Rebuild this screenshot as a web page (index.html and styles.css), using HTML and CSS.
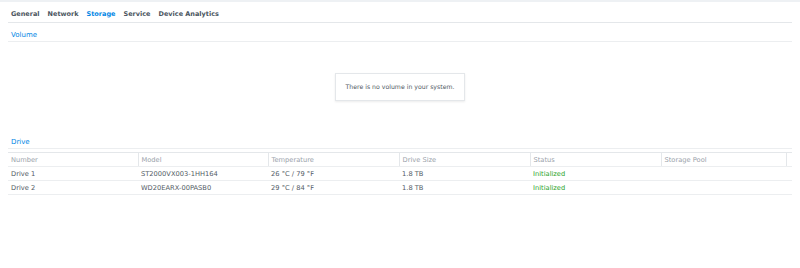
FILE: index.html
```html
<!DOCTYPE html>
<html lang="en">
<head>
  <meta charset="UTF-8" />
  <title>Info Center</title>
  <link rel="stylesheet" href="styles.css">
</head>
<body>
  <div class="top-strip"></div>
  <div class="page">
    <nav class="tabs">
      <span class="tab">General</span>
      <span class="tab">Network</span>
      <span class="tab active">Storage</span>
      <span class="tab">Service</span>
      <span class="tab">Device Analytics</span>
    </nav>

    <h2 class="section-title">Volume</h2>
    <div class="empty-area">
      <div class="empty-box">There is no volume in your system.</div>
    </div>

    <h2 class="section-title">Drive</h2>
    <table class="grid">
      <colgroup>
        <col class="c130"><col class="c130"><col class="c131"><col class="c131"><col class="c131"><col class="c125"><col>
      </colgroup>
      <thead>
        <tr>
          <th>Number</th><th>Model</th><th>Temperature</th><th>Drive Size</th><th>Status</th><th>Storage Pool</th><th class="pad"></th>
        </tr>
      </thead>
      <tbody>
        <tr>
          <td>Drive 1</td><td>ST2000VX003-1HH164</td><td>26 °C / 79 °F</td><td>1.8 TB</td><td class="ok">Initialized</td><td></td><td class="pad"></td>
        </tr>
        <tr>
          <td>Drive 2</td><td>WD20EARX-00PASB0</td><td>29 °C / 84 °F</td><td>1.8 TB</td><td class="ok">Initialized</td><td></td><td class="pad"></td>
        </tr>
      </tbody>
    </table>
  </div>
</body>
</html>
```

FILE: styles.css
```css
body {
  margin: 0;
  font-family: "DejaVu Sans", Verdana, sans-serif;
  font-size: 6.7px;
  color: #505a64;
  background: #fff;
}

.top-strip {
  height: 2px;
  background: #eef1f4;
}

.page {
  padding: 0 8px;
}

.tabs {
  display: flex;
  gap: 8px;
  padding: 8px 3px 0;
  height: 12px;
  border-bottom: 1px solid #e4e7ea;
}

.tab {
  font-size: 6.5px;
  font-weight: bold;
  color: #4a5560;
}

.tab.active {
  color: #0086e5;
}

.section-title {
  margin: 0;
  padding: 8px 3px 0;
  height: 10px;
  font-size: 7px;
  font-weight: normal;
  color: #0086e5;
  border-bottom: 1px solid #eceef0;
}

.empty-area {
  display: flex;
  justify-content: center;
  padding: 31px 0 29px;
}

.empty-box {
  width: 128px;
  height: 26px;
  line-height: 26px;
  text-align: center;
  font-size: 6.2px;
  border: 1px solid #e4e7ea;
  box-shadow: 0 1px 2px rgba(0,0,0,0.08);
  color: #505a64;
}

.grid {
  width: 100%;
  border-collapse: collapse;
  margin-top: 3px;
  table-layout: fixed;
}

.grid .c130 { width: 130px; }
.grid .c131 { width: 131px; }
.grid .c125 { width: 125px; }

.grid tr {
  height: 14px;
}

.grid th, .grid td {
  padding: 0 3px;
  text-align: left;
  font-weight: normal;
  border-bottom: 1px solid #eceef0;
}

.grid th {
  color: #9aa2aa;
  border-top: 1px solid #e4e7ea;
  border-right: 1px solid #e4e7ea;
}

.grid th.pad {
  border-right: none;
}

.grid .ok {
  color: #2ca52c;
}
```
